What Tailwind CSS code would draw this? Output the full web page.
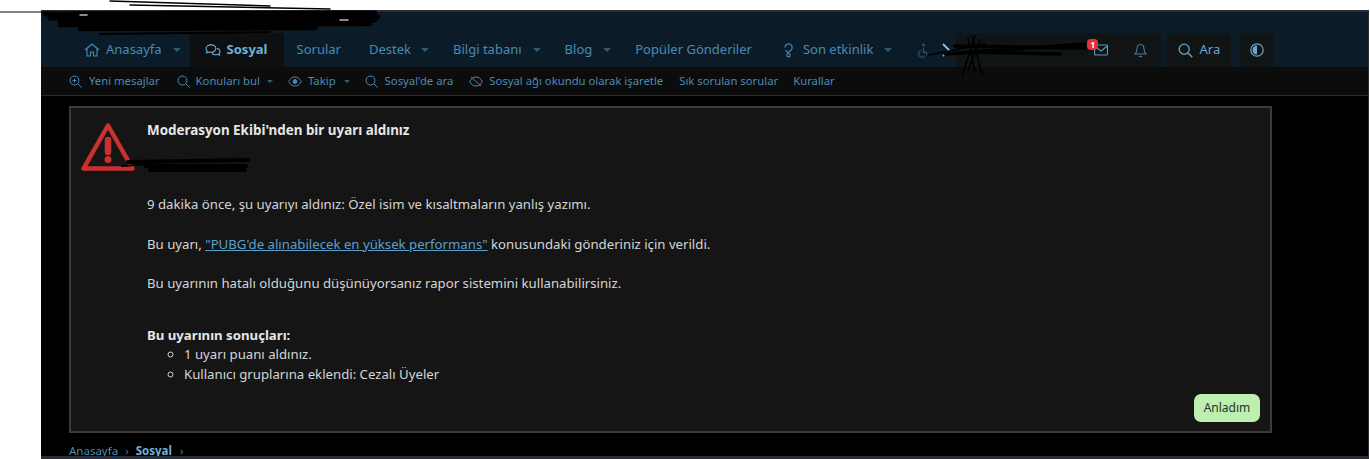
<!DOCTYPE html>
<html lang="tr">
<head>
<meta charset="UTF-8">
<title>Sosyal</title>
<script src="https://cdn.jsdelivr.net/npm/@tailwindcss/browser@4"></script>
</head>
<body class="bg-white overflow-hidden font-['Noto_Sans',sans-serif]">
<div class="relative w-[1370px] h-[459px] pt-[10px] pl-[41px] pr-[1px]">
  <div class="h-[449px] bg-black border-t-2 border-b-[3px] border-r border-[#2a2c36] flex flex-col overflow-hidden">
    <!-- top nav -->
    <header class="h-[55px] shrink-0 bg-[#0b1c28] flex items-end pl-[30px] text-[#4a8ab5] text-[13px]">
      <nav class="flex items-center h-[34px]">
        <a class="flex items-center gap-[6px] pl-[13px] pr-[9px] h-full">
          <svg class="w-[16px] h-[16px]" viewBox="0 0 16 16" fill="none" stroke="currentColor" stroke-width="1.1" stroke-linejoin="round"><path d="M1 8 8 2l7 6M3 6.500V14h3.500v-4h3v4H13V6.500"/></svg>
          Anasayfa<i class="ml-[5px] w-0 h-0 border-x-[4px] border-x-transparent border-t-[4px] border-t-[#2f5a78]"></i></a>
        <a class="flex items-center gap-[6px] pl-[15px] h-full w-[94px] bg-[#0e0f10] text-[#6fb1dc] font-bold">
          <svg class="w-[16px] h-[14px] shrink-0" viewBox="0 0 17 15" fill="none" stroke="currentColor" stroke-width="1.1"><path d="M6.500 2C3.500 2 1 3.800 1 6c0 1 .5 1.800 1.200 2.500L1.500 10.500 4 9.600c.8.300 1.600.4 2.500.4 3 0 5-1.800 5-4s-2-4-5-4Z"/><path d="M12.500 5.500c2 .5 3.500 1.900 3.500 3.500 0 .9-.4 1.600-1 2.200l.5 1.800-2.300-.8c-3 .8-5.500-.3-6.200-2.200"/></svg>
          Sosyal</a>
        <a class="flex items-center pl-[13px] pr-[14px] h-full">Sorular</a>
        <a class="flex items-center pl-[14px] pr-[10px] h-full">Destek<i class="ml-[10px] w-0 h-0 border-x-[4px] border-x-transparent border-t-[4px] border-t-[#2f5a78]"></i></a>
        <a class="flex items-center pl-[14px] pr-[9px] h-full">Bilgi tabanı<i class="ml-[11px] w-0 h-0 border-x-[4px] border-x-transparent border-t-[4px] border-t-[#2f5a78]"></i></a>
        <a class="flex items-center pl-[15px] pr-[10px] h-full">Blog<i class="ml-[11px] w-0 h-0 border-x-[4px] border-x-transparent border-t-[4px] border-t-[#2f5a78]"></i></a>
        <a class="flex items-center pl-[14px] pr-[14px] h-full">Popüler Gönderiler</a>
        <a class="flex items-center gap-[9px] pl-[17px] h-full">
          <svg class="w-[11px] h-[16px]" viewBox="0 0 11 16" fill="none" stroke="currentColor" stroke-width="1.200"><path d="M2 5.500a3.600 3.600 0 1 1 5.800 2.800C6.500 9.300 5.500 10 5.500 11"/><path d="M2.500 8c.8 1.200 2 2 3 3"/><circle cx="5.500" cy="13.200" r="1.700"/></svg>
          Son etkinlik<i class="ml-[2px] w-0 h-0 border-x-[4px] border-x-transparent border-t-[4px] border-t-[#2f5a78]"></i></a>
        <svg class="ml-[26px] w-[11px] h-[15px] text-[#2f5570]" viewBox="0 0 12 16" fill="none" stroke="currentColor" stroke-width="1.200"><circle cx="6" cy="2" r="1"/><path d="M6 5v5h3l1.500 4M3.500 8a3.700 3.700 0 1 0 4 5.500"/></svg>
        <svg class="ml-[12px] w-[10px] h-[14px] text-[#8fc0e0]" viewBox="0 0 10 14" fill="none" stroke="currentColor" stroke-width="1.800"><path d="m2 1 6 6-6 6"/></svg>
      </nav>
      <div class="ml-[5px] h-[34px] w-[205px] bg-[#101415] flex items-center justify-end gap-[26px] pr-[14px] relative">
        <div class="absolute left-[131px] top-[6px] min-w-[11px] h-[11px] rounded-[4px] bg-[#e0323c] text-white text-[8px] leading-[11px] text-center font-bold">1</div>
        <svg class="w-[14px] h-[12px] text-[#5a9ac2]" viewBox="0 0 15 12" fill="none" stroke="currentColor" stroke-width="1.200"><rect x=".6" y=".6" width="13.800" height="10.800" rx="1"/><path d="m1 2 6.500 5L14 2"/></svg>
        <svg class="w-[13px] h-[15px] text-[#50789a]" viewBox="0 0 13 15" fill="none" stroke="currentColor" stroke-width="1.100"><path d="M6.500 1.500C4 1.500 3 3.500 3 6c0 3-2 5-2 5h11s-2-2-2-5c0-2.500-1-4.500-3.500-4.500ZM5 13c.4 1 2.600 1 3 0"/></svg>
      </div>
      <div class="ml-[6px] h-[34px] w-[64px] bg-[#101415] flex items-center justify-center gap-[6px] text-[#6aa5cc]">
        <svg class="w-[15px] h-[15px]" viewBox="0 0 15 15" fill="none" stroke="currentColor" stroke-width="1.300"><circle cx="6.200" cy="6.200" r="5"/><path d="m10 10 4.300 4.300"/></svg>
        Ara</div>
      <div class="ml-[9px] h-[34px] w-[33px] bg-[#101415] flex items-center justify-center">
        <svg class="w-[14px] h-[14px] text-[#6aa5cc]" viewBox="0 0 14 14"><circle cx="7" cy="7" r="6.200" fill="none" stroke="currentColor" stroke-width="1.200"/><path d="M7 2.500a4.500 4.500 0 0 0 0 9Z" fill="currentColor"/></svg>
      </div>
    </header>
    <!-- sub nav -->
    <div class="h-[29px] shrink-0 bg-[#0c0c0c] border-b border-[#2b2b2b] flex items-center pl-[28px] text-[#4a8ab5] text-[11.300px]">
      <a class="flex items-center gap-[7px]"><svg class="w-[13px] h-[13px]" viewBox="0 0 13 13" fill="none" stroke="currentColor" stroke-width="1"><circle cx="5.500" cy="5.500" r="4.500"/><path d="m9 9 3.500 3.500M5.500 3.500v4M3.500 5.500h4"/></svg>Yeni mesajlar</a>
      <a class="flex items-center gap-[6px] ml-[17px]"><svg class="w-[13px] h-[13px]" viewBox="0 0 13 13" fill="none" stroke="currentColor" stroke-width="1"><circle cx="5.500" cy="5.500" r="4.500"/><path d="m9 9 3.500 3.500"/></svg>Konuları bul<i class="ml-[1px] w-0 h-0 border-x-[3.500px] border-x-transparent border-t-[3.500px] border-t-[#2f5a78]"></i></a>
      <a class="flex items-center gap-[6px] ml-[15px]"><svg class="w-[14px] h-[11px]" viewBox="0 0 14 11" fill="none" stroke="currentColor" stroke-width="1"><path d="M.7 5.500C2.200 2.500 4.500 1 7 1s4.800 1.500 6.300 4.500C11.800 8.500 9.500 10 7 10S2.200 8.500.7 5.500Z"/><circle cx="7" cy="5.500" r="2" fill="currentColor"/></svg>Takip<i class="ml-[2px] w-0 h-0 border-x-[3.500px] border-x-transparent border-t-[3.500px] border-t-[#2f5a78]"></i></a>
      <a class="flex items-center gap-[7px] ml-[15px]"><svg class="w-[13px] h-[13px]" viewBox="0 0 13 13" fill="none" stroke="currentColor" stroke-width="1"><circle cx="5.500" cy="5.500" r="4.500"/><path d="m9 9 3.500 3.500"/></svg>Sosyal'de ara</a>
      <a class="flex items-center gap-[6px] ml-[16px]"><svg class="w-[14px] h-[11px]" viewBox="0 0 14 11" fill="none" stroke="currentColor" stroke-width="1"><path d="M.7 5.500C2.200 2.500 4.500 1 7 1s4.800 1.500 6.300 4.500C11.800 8.500 9.500 10 7 10S2.200 8.500.7 5.500ZM2 1l10 9"/></svg>Sosyal ağı okundu olarak işaretle</a>
      <a class="ml-[16px]">Sık sorulan sorular</a>
      <a class="ml-[15px]">Kurallar</a>
    </div>
    <!-- notice -->
    <main class="flex-1 px-[28px] pt-[10px] text-[#d6d6d6] text-[13.200px]">
      <section class="w-[1203px] h-[327px] shrink-0 bg-[#151515] border-2 border-[#3a3a3a] relative flex">
        <div class="w-[76px] shrink-0 pl-[10px] pt-[14px]">
          <svg class="w-[54px] h-[50px]" viewBox="0 0 54 50"><path d="M27 3.500 2.500 46.500h49Z" fill="none" stroke="#c9302f" stroke-width="4.500" stroke-linejoin="round"/><path d="M27 18v12" stroke="#c9302f" stroke-width="6.500" stroke-linecap="round"/><circle cx="27" cy="37.500" r="3.500" fill="#c9302f"/></svg>
        </div>
        <div class="pt-[12px] leading-[20px]">
          <h2 class="font-bold text-[13.400px] text-[#e6e6e6]">Moderasyon Ekibi'nden bir uyarı aldınız</h2>
          <p class="mt-[54px]">9 dakika önce, şu uyarıyı aldınız: Özel isim ve kısaltmaların yanlış yazımı.</p>
          <p class="mt-[20px]">Bu uyarı, <a class="text-[#5aa0cf] underline">"PUBG'de alınabilecek en yüksek performans"</a> konusundaki gönderiniz için verildi.</p>
          <p class="mt-[19px]">Bu uyarının hatalı olduğunu düşünüyorsanız rapor sistemini kullanabilirsiniz.</p>
          <p class="mt-[32px] font-bold text-[#e6e6e6]">Bu uyarının sonuçları:</p>
          <ul class="-mt-[1px] pl-[37px] list-[circle] list-outside">
            <li>1 uyarı puanı aldınız.</li>
            <li>Kullanıcı gruplarına eklendi: Cezalı Üyeler</li>
          </ul>
        </div>
        <button class="absolute right-[10px] bottom-[9px] w-[66px] h-[28px] rounded-[7px] bg-[#bdf0b0] text-[#263326] text-[12px]">Anladım</button>
      </section>
      <div class="flex items-center mt-[10px] text-[11.500px] leading-[16px] text-[#4a8ab5]">
        <span>Anasayfa</span><span class="mx-[7px] text-[#4a7a9a]">›</span><b class="text-[#6fb1dc]">Sosyal</b><span class="ml-[8px] text-[#4a7a9a]">›</span>
      </div>
    </main>
  </div>
  <!-- redaction scribbles -->
  <svg class="absolute left-0 top-0 w-[1370px] h-[459px] pointer-events-none" viewBox="0 0 1370 459" fill="none" stroke="#000" stroke-linecap="round">
    <path d="M0 12 50 12" stroke-width="1"/>
    <path d="M110 1 270 6" stroke-width="1.500"/>
    <path d="M130 5 330 9" stroke-width="1.500"/>
    <path d="M45 14 375 13M50 18 378 17M60 22 375 20" stroke-width="5"/>
    <path d="M60 25 370 24M80 29 315 28" stroke-width="4.500"/>
    <path d="M100 34 270 32" stroke-width="2"/>
    <path d="M80 15 87 15M340 20 348 20" stroke="#bbb" stroke-width="1.500"/>
    <path d="M945 54 1085 44M955 46 1085 48M970 52 1060 54" stroke-width="3.500"/>
    <path d="M975 36 962 76M980 40 968 70M972 36 982 74M968 38 975 72" stroke-width="1.500"/>
    <path d="M928 55 985 44" stroke-width="1.500"/>
    <path d="M128 162 248 160M146 166 246 166M150 170 245 170" stroke-width="4"/>
    <path d="M122 166 150 164" stroke-width="2"/>
  </svg>
</div>
</body>
</html>
